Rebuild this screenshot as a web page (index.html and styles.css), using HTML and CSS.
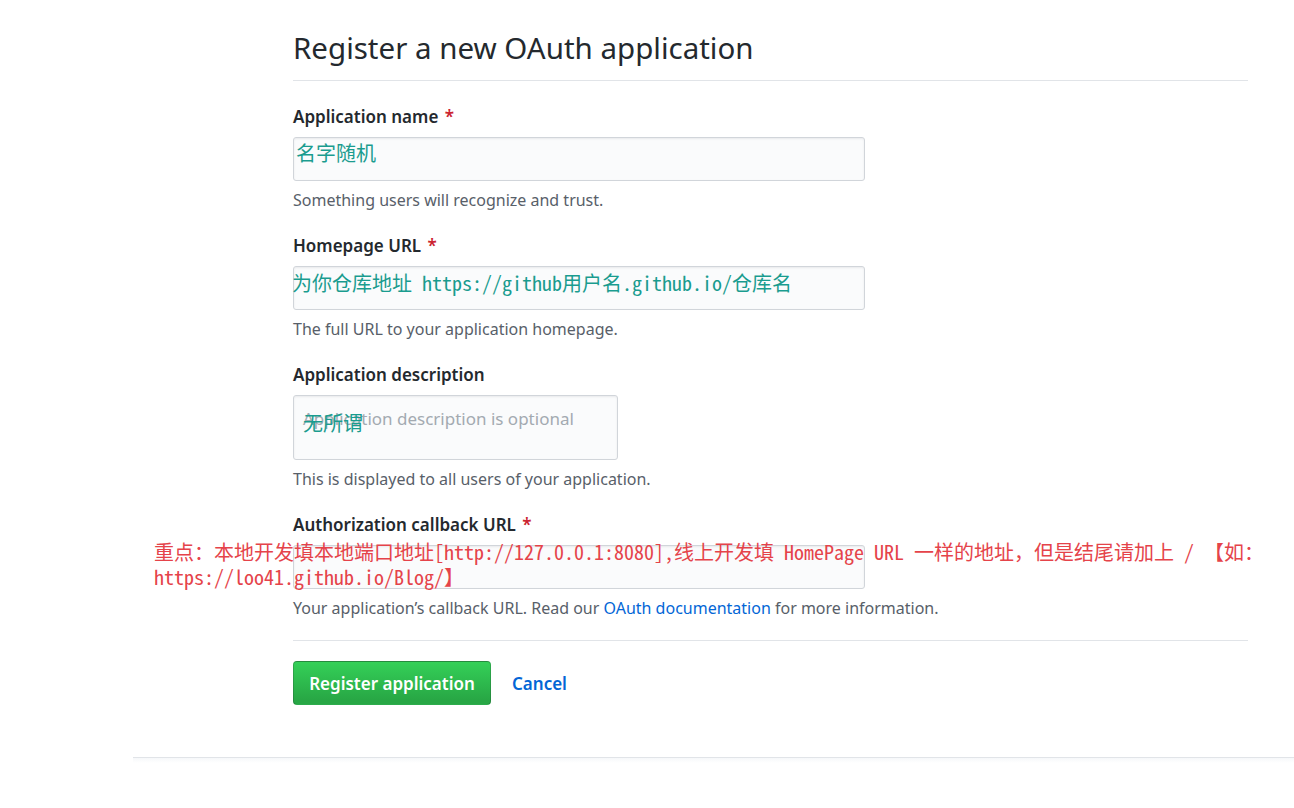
FILE: index.html
```html
<!DOCTYPE html>
<html lang="zh-CN">
<head>
<meta charset="utf-8">
<title>Register a new OAuth application</title>
<link rel="stylesheet" href="styles.css">
</head>
<body>
<div class="page">
  <main class="main">
    <h2 class="title">Register a new OAuth application</h2>
    <div class="form">
      <div class="group">
        <div class="label">Application name <span class="req">*</span></div>
        <div class="input input-wide"><span class="anno anno-name">名字随机</span></div>
        <p class="note">Something users will recognize and trust.</p>
      </div>
      <div class="group">
        <div class="label">Homepage URL <span class="req">*</span></div>
        <div class="input input-wide"><span class="anno anno-home">为你仓库地址 https://github用户名.github.io/仓库名</span></div>
        <p class="note">The full URL to your application homepage.</p>
      </div>
      <div class="group">
        <div class="label">Application description</div>
        <div class="input textarea">
          <span class="placeholder">Application description is optional</span>
          <span class="anno anno-desc">无所谓</span>
        </div>
        <p class="note">This is displayed to all users of your application.</p>
      </div>
      <div class="group group-last">
        <div class="label">Authorization callback URL <span class="req">*</span></div>
        <div class="input input-wide"></div>
        <p class="note">Your application’s callback URL. Read our <a class="link" href="#">OAuth documentation</a> for more information.</p>
        <div class="red-note">重点：本地开发填本地端口地址[http://127.0.0.1:8080],线上开发填 HomePage URL 一样的地址，但是结尾请加上 / 【如：<br>https://loo41.github.io/Blog/】</div>
      </div>
    </div>
    <div class="actions">
      <button class="btn" type="button">Register application</button>
      <a class="cancel" href="#">Cancel</a>
    </div>
  </main>
  <footer class="footer"></footer>
</div>
</body>
</html>
```
FILE: styles.css
```css
* { box-sizing: border-box; }
html, body { margin: 0; padding: 0; background: #fff; }
body {
  font-family: "Noto Sans", "Open Sans", sans-serif;
  color: #24292e;
  width: 1294px;
  height: 808px;
  overflow: hidden;
}
.page { padding-left: 133px; }
.main {
  margin-left: 160px;
  width: 955px;
  padding-top: 26px;
}
.title {
  margin: 0;
  font-size: 29.5px;
  font-weight: 400;
  line-height: 44px;
  padding-bottom: 10px;
  border-bottom: 1px solid #e1e4e8;
  color: #24292e;
}
.form { padding-top: 25px; }
.group { position: relative; margin-bottom: 24px; }
.group-last { margin-bottom: 20px; padding-bottom: 21px; border-bottom: 1px solid #e1e4e8; }
.label {
  font-size: 17px;
  font-weight: 600;
  line-height: 22px;
  margin-bottom: 9px;
}
.req { color: #cb2431; margin-left: 2px; }
.input {
  position: relative;
  height: 44px;
  border: 1px solid #d1d5da;
  border-radius: 3px;
  background: #fafbfc;
  box-shadow: inset 0 1px 2px rgba(27,31,35,0.075);
}
.input-wide { width: 572px; }
.textarea { width: 325px; height: 65px; }
.note {
  margin: 8px 0 0;
  font-size: 16px;
  line-height: 22px;
  color: #586069;
}
.link { color: #0366d6; text-decoration: none; }
.anno {
  position: absolute;
  font-family: "Noto Sans Mono CJK SC", "Liberation Mono", "Noto Sans CJK SC", monospace;
  font-size: 20px;
  line-height: 24px;
  color: #1a9c8f;
  white-space: nowrap;
}
.anno-name { left: 2px; top: 3px; }
.anno-home { left: -2px; top: 4px; }
.anno-desc { left: 9px; top: 15px; }
.placeholder {
  position: absolute;
  left: 9px;
  top: 11px;
  font-size: 17px;
  line-height: 24px;
  color: #a3aab1;
  white-space: nowrap;
}
.red-note {
  position: absolute;
  left: -139px;
  top: 25px;
  font-family: "Noto Sans Mono CJK SC", "Liberation Mono", "Noto Sans CJK SC", monospace;
  font-size: 20px;
  line-height: 25px;
  color: #e5434a;
  white-space: nowrap;
}
.actions { display: flex; align-items: center; gap: 21px; }
.btn {
  height: 44px;
  width: 198px;
  padding: 0;
  border: 1px solid rgba(27,31,35,0.2);
  border-radius: 4px;
  background: linear-gradient(#34d058, #28a745 90%);
  color: #fff;
  font-family: "Noto Sans", "Open Sans", sans-serif;
  font-size: 17px;
  font-weight: 600;
}
.cancel {
  color: #0366d6;
  font-size: 17px;
  font-weight: 600;
  text-decoration: none;
}
.footer {
  margin-top: 52px;
  border-top: 1px solid #e1e4e8;
  height: 6px;
  background: linear-gradient(#f6f8fa, #fff);
}
```
